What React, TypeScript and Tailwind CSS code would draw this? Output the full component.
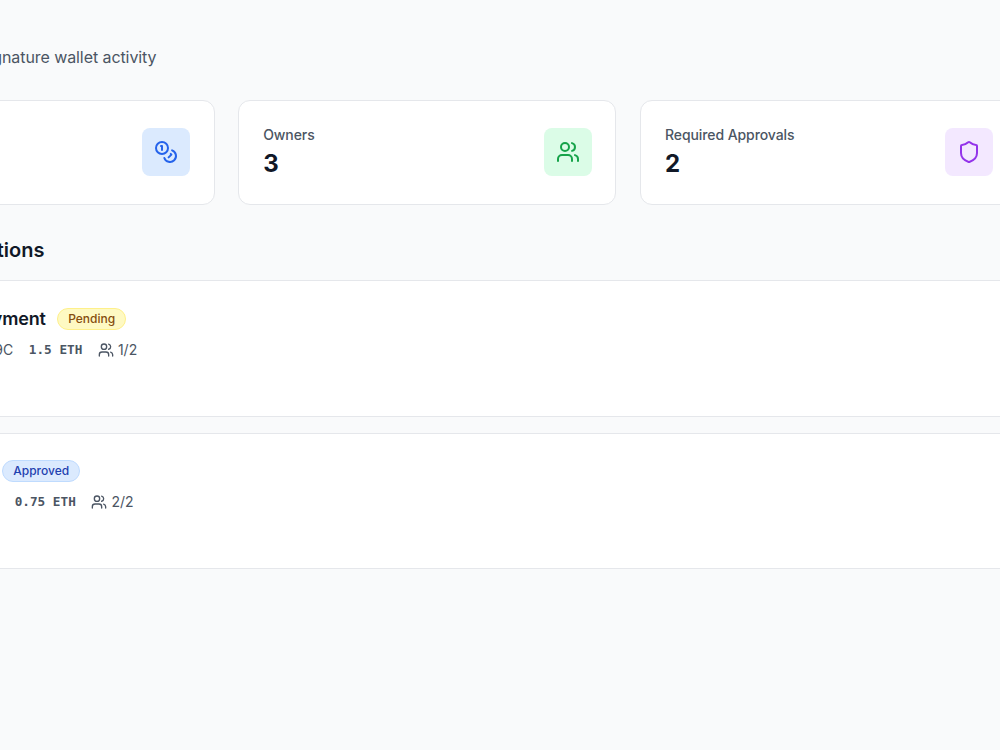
import React from 'react'
import { Coins, Shield, Users } from 'lucide-react'

interface StatCardProps {
  label?: string
  value?: string
  tileClass: string
  icon: React.ReactNode
}

const StatCard: React.FC<StatCardProps> = ({ label, value, tileClass, icon }) => {
  return (
    <div className="h-[105px] bg-white rounded-xl border border-gray-200 pl-6 pr-[23.8px] pt-[22.5px] pb-6">
      <div className="flex items-center justify-between h-full">
        <div>
          <p className="mt-px text-sm font-medium tracking-[-0.006em] text-[#4b5563]">{label}</p>
          <p className="mt-[3px] mb-px text-2xl leading-[31px] font-bold text-[#111827]">{value}</p>
        </div>
        <div className={`w-12 h-12 rounded-lg flex items-center justify-center ${tileClass}`}>
          {icon}
        </div>
      </div>
    </div>
  )
}

interface TransactionProps {
  title?: string
  status: string
  badgeClass: string
  address?: string
  amount: string
  approvals: string
  headClass: string
  metaClass: string
}

const TransactionCard: React.FC<TransactionProps> = ({
  title, status, badgeClass, address, amount, approvals, headClass, metaClass
}) => {
  return (
    <div className="h-[136.5px] bg-white border-y border-gray-200 pt-6">
      <div className={`flex items-center justify-end gap-[11.5px] h-[27px] ${headClass}`}>
        <h3 className="text-lg leading-[27px] font-semibold tracking-[-0.01em] text-[#111827]">{title}</h3>
        <span className={`px-2.5 py-0.5 rounded-full border text-xs font-medium ${badgeClass}`}>
          {status}
        </span>
      </div>
      <div className={`mt-[7.8px] flex items-center justify-end gap-[15.6px] text-sm text-[#4b5563] whitespace-nowrap ${metaClass}`}>
        <span>{address}</span>
        <span className="font-['DejaVu_Sans_Mono',monospace] text-[12.7px] leading-5 font-bold">{amount}</span>
        <span className="flex items-center gap-1">
          <Users className="w-4 h-4" />
          {approvals}
        </span>
      </div>
    </div>
  )
}

const App: React.FC = () => {
  return (
    <div className="w-full h-[750px] overflow-hidden bg-gray-50 font-['Inter',sans-serif]">
      <p className="pt-[45px] w-[156.5px] flex justify-end whitespace-nowrap text-base tracking-[-0.005em] text-[#4b5563]">
        gnature wallet activity
      </p>

      {/* Stats */}
      <div className="mt-[31px] -ml-[163.6px] w-[1181.8px] grid grid-cols-3 gap-[23.6px]">
        <StatCard tileClass="bg-blue-100" icon={<Coins className="w-6 h-6 text-[#2563eb]" />} />
        <StatCard
          label="Owners"
          value="3"
          tileClass="bg-green-100"
          icon={<Users className="w-6 h-6 text-[#16a34a]" />}
        />
        <StatCard
          label="Required Approvals"
          value="2"
          tileClass="bg-purple-100"
          icon={<Shield className="w-6 h-6 text-[#9333ea]" />}
        />
      </div>

      <h2 className="mt-[31px] w-[44.5px] flex justify-end text-xl font-semibold text-[#111827]">tions</h2>

      {/* Transactions */}
      <div className="mt-4 flex flex-col gap-4">
        <TransactionCard
          title="yment"
          status="Pending"
          badgeClass="bg-[#fef9c3] text-[#854d0e] border-[#fef08a]"
          address="9C"
          amount="1.5 ETH"
          approvals="1/2"
          headClass="w-[126.2px]"
          metaClass="w-[137.2px]"
        />
        <TransactionCard
          status="Approved"
          badgeClass="bg-[#dbeafe] text-[#1e40af] border-[#bfdbfe]"
          amount="0.75 ETH"
          approvals="2/2"
          headClass="w-[80.2px]"
          metaClass="w-[133.5px]"
        />
      </div>
    </div>
  )
}

export default App
